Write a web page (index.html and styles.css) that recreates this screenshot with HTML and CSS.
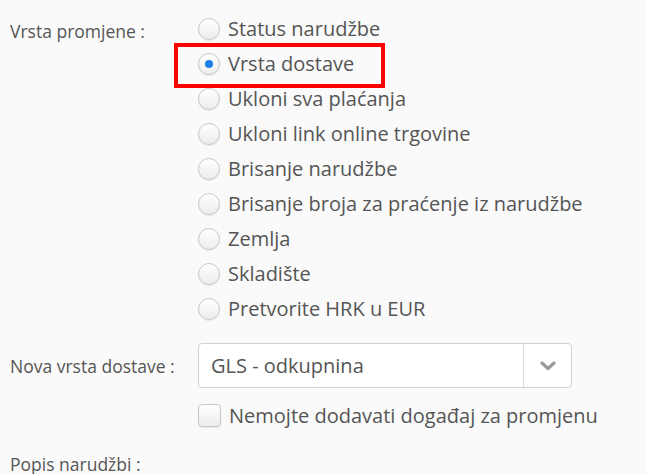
FILE: index.html
```html
<!DOCTYPE html>
<html>
<head>
<meta charset="utf-8">
<link rel="stylesheet" href="styles.css">
</head>
<body>
<div class="form">
  <div class="row">
    <div class="label label-top">Vrsta promjene :</div>
    <div class="options">
      <label class="opt"><span class="radio"></span><span>Status narudžbe</span></label>
      <label class="opt highlighted"><span class="radio checked"></span><span>Vrsta dostave</span><span class="hl"></span></label>
      <label class="opt"><span class="radio"></span><span>Ukloni sva plaćanja</span></label>
      <label class="opt"><span class="radio"></span><span>Ukloni link online trgovine</span></label>
      <label class="opt"><span class="radio"></span><span>Brisanje narudžbe</span></label>
      <label class="opt"><span class="radio"></span><span>Brisanje broja za praćenje iz narudžbe</span></label>
      <label class="opt"><span class="radio"></span><span>Zemlja</span></label>
      <label class="opt"><span class="radio"></span><span>Skladište</span></label>
      <label class="opt"><span class="radio"></span><span>Pretvorite HRK u EUR</span></label>
    </div>
  </div>
  <div class="row row-select">
    <div class="label">Nova vrsta dostave :</div>
    <div class="select">
      <span class="select-value">GLS - odkupnina</span>
      <span class="select-btn">
        <svg width="16" height="10" viewBox="0 0 16 10"><path d="M2 2 L8 7.5 L14 2" fill="none" stroke="#9a9a9a" stroke-width="3.2" stroke-linecap="round" stroke-linejoin="round"/></svg>
      </span>
    </div>
  </div>
  <div class="row row-check">
    <div class="label"></div>
    <label class="opt"><span class="checkbox"></span><span>Nemojte dodavati događaj za promjenu</span></label>
  </div>
  <div class="row row-last">
    <div class="label">Popis narudžbi :</div>
  </div>
</div>
</body>
</html>
```

FILE: styles.css
```css
html, body {
  margin: 0;
  padding: 0;
  background: #fafafa;
}
body {
  font-family: "Open Sans", "Liberation Sans", sans-serif;
  color: #555;
  overflow: hidden;
}
.form {
  padding: 11px 0 0 10px;
}
.row {
  display: grid;
  grid-template-columns: 188px 1fr;
  align-items: center;
}
.label {
  font-size: 17.5px;
  color: #555;
}
.label-top {
  align-self: start;
  padding-top: 8px;
}
.options {
  display: flex;
  flex-direction: column;
}
.opt {
  position: relative;
  display: flex;
  align-items: center;
  height: 35px;
  gap: 8px;
  font-size: 20px;
  color: #555;
}
.radio {
  width: 20px;
  height: 20px;
  border-radius: 50%;
  border: 1px solid #c8c8c8;
  background: linear-gradient(#ffffff, #ececec);
  box-shadow: 0 1px 1px rgba(0,0,0,0.08);
  display: flex;
  align-items: center;
  justify-content: center;
  flex: none;
}
.radio.checked::after {
  content: "";
  width: 8px;
  height: 8px;
  border-radius: 50%;
  background: #1a7fe6;
}
.hl {
  position: absolute;
  left: -24px;
  top: -3px;
  width: 203px;
  height: 37px;
  border: 4px solid #ff0000;
}
.row-select {
  margin-top: 17px;
}
.select {
  width: 372px;
  height: 43px;
  border: 1px solid #d0d0d0;
  border-radius: 4px;
  background: #fff;
  display: flex;
  align-items: center;
}
.select-value {
  flex: 1;
  padding-left: 12px;
  font-size: 20px;
  color: #555;
}
.select-btn {
  width: 47px;
  height: 100%;
  border-left: 1px solid #dcdcdc;
  display: flex;
  align-items: center;
  justify-content: center;
}
.row-check {
  margin-top: 15px;
}
.checkbox {
  width: 21px;
  height: 21px;
  border: 1px solid #c8c8c8;
  border-radius: 4px;
  background: linear-gradient(#ffffff, #ececec);
  box-shadow: 0 1px 1px rgba(0,0,0,0.08);
  flex: none;
}
.row-check .opt {
  height: 24px;
}
.row-last {
  margin-top: 25px;
}
```
